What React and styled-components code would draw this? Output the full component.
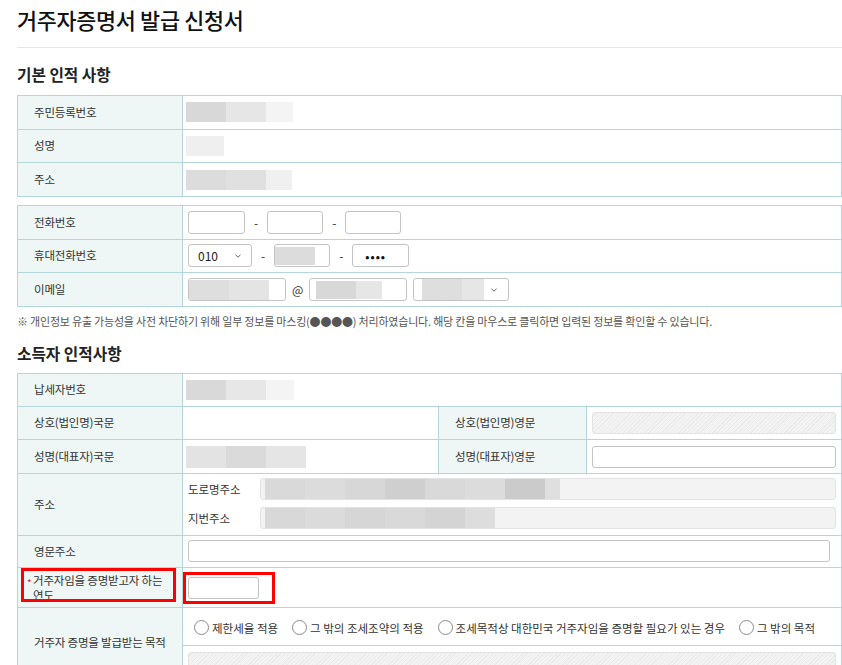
import styled, { createGlobalStyle } from "styled-components";

const GlobalStyle = createGlobalStyle`
  body {
    margin: 0;
    background: #fff;
    font-family: "Noto Sans CJK KR", "Noto Sans", sans-serif;
    color: #333;
  }
`;

const Page = styled.div`
  width: 825px;
  padding: 0 0 40px 17px;
`;

const Title = styled.h1`
  margin: 0;
  padding: 5px 0 12px;
  font-size: 21.8px;
  line-height: 30px;
  font-weight: 500;
  color: #111;
  letter-spacing: -0.3px;
  border-bottom: 1px solid #e5e5e5;
`;

const Heading = styled.h2`
  margin: ${(p) => p.$top}px 0 ${(p) => p.$bottom}px;
  font-size: 15.7px;
  line-height: 20px;
  font-weight: 700;
  color: #222;
`;

const Table = styled.table`
  width: 100%;
  border-collapse: collapse;
  table-layout: fixed;
  border: 1px solid #b2d6da;
  margin-bottom: ${(p) => p.$gap || 0}px;
`;

const Row = styled.tr`
  height: ${(p) => (p.$h || 34) - 0.33}px;
`;

const Th = styled.th`
  position: relative;
  background: #eef7f6;
  border: 1px solid #b2d6da;
  text-align: left;
  font-weight: 400;
  font-size: 11.5px;
  line-height: 15px;
  letter-spacing: -0.2px;
  white-space: nowrap;
  padding: 0 2px 0 ${(p) => (p.$req ? 15 : 16)}px;
  color: #333;
`;

const Td = styled.td`
  position: relative;
  border: 1px solid #b2d6da;
  padding: 0 5px;
  font-size: 11.5px;
  color: #333;
`;

const Line = styled.div`
  display: flex;
  align-items: center;
`;

const Mask = styled.div`
  display: flex;
  height: ${(p) => p.$h || 20}px;
  margin-left: -2px;
`;

const Seg = styled.span`
  display: block;
  width: ${(p) => p.$w}px;
  background: ${(p) => p.$c};
`;

const Field = styled.div`
  box-sizing: border-box;
  display: flex;
  flex: none;
  align-items: center;
  width: ${(p) => p.$w}px;
  height: 23px;
  margin-left: ${(p) => p.$ml || 0}px;
  border: 1px solid #c4c4c4;
  border-radius: 3px;
  background: #fff;
  padding: 0 ${(p) => p.$pad ?? 9}px;
  font-size: 12px;
  color: #222;
  overflow: hidden;
`;

const WideField = styled(Field)`
  width: ${(p) => p.$w || "100%"};
  height: 22px;
`;

const Disabled = styled.div`
  box-sizing: border-box;
  display: flex;
  align-items: center;
  flex: 1;
  height: 22px;
  border: 1px solid #e3e3e3;
  border-radius: 3px;
  padding-left: 6px;
  background: ${(p) =>
    p.$hatch
      ? "repeating-linear-gradient(135deg, #f3f3f3 0 2px, #ebebeb 2px 3px)"
      : "#f3f3f3"};
  overflow: hidden;
`;

const Dash = styled.span`
  margin: 0 9px;
  font-size: 12px;
  color: #333;
`;

const At = styled.span`
  margin: 0 6px;
  font-size: 12px;
  color: #333;
`;

const Chevron = styled.svg`
  margin-left: auto;
  flex: none;
`;

const Dots = styled.span`
  font-size: 11px;
  font-weight: 700;
  letter-spacing: 1px;
  color: #111;
`;

const AddrBlock = styled.div`
  display: flex;
  flex-direction: column;
  gap: 7px;
  padding: 4px 0 5px;
`;

const AddrName = styled.span`
  width: 72px;
  flex: none;
  font-size: 11.5px;
  letter-spacing: -0.1px;
`;

const Note = styled.p`
  margin: 6px 0 0;
  font-size: 11px;
  line-height: 16px;
  color: #555;
  letter-spacing: -0.2px;
`;

const Star = styled.span`
  position: absolute;
  left: 9px;
  top: 7px;
  color: #e02020;
  font-size: 10px;
`;

const Marker = styled.div`
  position: absolute;
  box-sizing: border-box;
  border: 3px solid #f00;
  left: ${(p) => p.$x}px;
  top: ${(p) => p.$y}px;
  width: ${(p) => p.$w}px;
  height: ${(p) => p.$h}px;
  pointer-events: none;
`;

const RadioLine = styled.div`
  display: flex;
  align-items: center;
  gap: 14px;
  height: 34px;
  padding-left: 11px;
  border-bottom: 1px solid #b2d6da;
  margin: 0 -5px;
`;

const Radio = styled.label`
  display: flex;
  align-items: center;
  gap: 3px;
  font-size: 11.5px;
  letter-spacing: 0;
  color: #333;
  white-space: nowrap;
`;

const Circle = styled.span`
  box-sizing: border-box;
  width: 15px;
  height: 15px;
  border-radius: 50%;
  border: 1px solid #8a8a8a;
  background: #fff;
`;

const PurposeBox = styled.div`
  display: flex;
  padding: 6px 0 0;
`;

const down = (
  <Chevron width="8" height="6" viewBox="0 0 8 6">
    <path d="M1.5 1.8 L4 4.2 L6.5 1.8" fill="none" stroke="#666" strokeWidth="1" />
  </Chevron>
);

const masks = {
  rrn: [[40, "#d8d8d8"], [40, "#e6e6e6"], [27, "#f4f4f4"]],
  name: [[38, "#efefef"]],
  addr: [[40, "#dcdcdc"], [40, "#e0e0e0"], [26, "#f0f0f0"]],
  tin: [[40, "#d9d9d9"], [40, "#e7e7e7"], [28, "#f4f4f4"]],
  rep: [[40, "#e3e3e3"], [40, "#dadada"], [40, "#e5e5e5"]],
  road: [
    [40, "#d9d9d9"], [40, "#dcdcdc"], [40, "#d7d7d7"], [40, "#cfcfcf"],
    [40, "#d9d9d9"], [40, "#dcdcdc"], [40, "#cbcbcb"], [15, "#dfdfdf"],
  ],
  lot: [
    [40, "#d8d8d8"], [40, "#dbdbdb"], [40, "#d6d6d6"], [40, "#d9d9d9"],
    [40, "#d4d4d4"], [30, "#dddddd"],
  ],
  mobile: [[40, "#dcdcdc"]],
  mail1: [[40, "#dedede"], [40, "#e4e4e4"]],
  mail2: [[40, "#d8d8d8"], [26, "#e6e6e6"]],
  mail3: [[40, "#dedede"], [22, "#e6e6e6"]],
};

function Masked({ name, h }) {
  return (
    <Mask $h={h}>
      {masks[name].map(([w, c], i) => (
        <Seg key={i} $w={w} $c={c} />
      ))}
    </Mask>
  );
}

const purposes = [
  "제한세율 적용",
  "그 밖의 조세조약의 적용",
  "조세목적상 대한민국 거주자임을 증명할 필요가 있는 경우",
  "그 밖의 목적",
];

export default function App() {
  return (
    <Page>
      <GlobalStyle />
      <Title>거주자증명서 발급 신청서</Title>

      <Heading $top={17} $bottom={10}>기본 인적 사항</Heading>
      <Table $gap={8}>
        <colgroup>
          <col width="165" />
          <col />
        </colgroup>
        <tbody>
          <Row>
            <Th>주민등록번호</Th>
            <Td><Masked name="rrn" /></Td>
          </Row>
          <Row>
            <Th>성명</Th>
            <Td><Masked name="name" /></Td>
          </Row>
          <Row>
            <Th>주소</Th>
            <Td><Masked name="addr" /></Td>
          </Row>
        </tbody>
      </Table>

      <Table>
        <colgroup>
          <col width="165" />
          <col />
        </colgroup>
        <tbody>
          <Row>
            <Th>전화번호</Th>
            <Td>
              <Line>
                <Field $w={57} />
                <Dash>-</Dash>
                <Field $w={56} />
                <Dash>-</Dash>
                <Field $w={56} />
              </Line>
            </Td>
          </Row>
          <Row>
            <Th>휴대전화번호</Th>
            <Td>
              <Line>
                <Field $w={64}>010{down}</Field>
                <Dash>-</Dash>
                <Field $w={56} $pad={2}><Masked name="mobile" h={18} /></Field>
                <Dash>-</Dash>
                <Field $w={57} $pad={12}><Dots>••••</Dots></Field>
              </Line>
            </Td>
          </Row>
          <Row>
            <Th>이메일</Th>
            <Td>
              <Line>
                <Field $w={98} $pad={2}><Masked name="mail1" h={20} /></Field>
                <At>@</At>
                <Field $w={98} $pad={8}><Masked name="mail2" h={18} /></Field>
                <Field $w={96} $pad={10} $ml={6}>
                  <Masked name="mail3" h={22} />
                  {down}
                </Field>
              </Line>
            </Td>
          </Row>
        </tbody>
      </Table>

      <Note>
        ※ 개인정보 유출 가능성을 사전 차단하기 위해 일부 정보를 마스킹(●●●●) 처리하였습니다. 해당 칸을
        마우스로 클릭하면 입력된 정보를 확인할 수 있습니다.
      </Note>

      <Heading $top={15} $bottom={9}>소득자 인적사항</Heading>
      <Table>
        <colgroup>
          <col width="165" />
          <col width="256" />
          <col width="148" />
          <col />
        </colgroup>
        <tbody>
          <Row $h={33}>
            <Th>납세자번호</Th>
            <Td colSpan={3}><Masked name="tin" /></Td>
          </Row>
          <Row>
            <Th>상호(법인명)국문</Th>
            <Td />
            <Th>상호(법인명)영문</Th>
            <Td><Line><Disabled $hatch /></Line></Td>
          </Row>
          <Row>
            <Th>성명(대표자)국문</Th>
            <Td><Masked name="rep" h={22} /></Td>
            <Th>성명(대표자)영문</Th>
            <Td><WideField $w="100%" /></Td>
          </Row>
          <Row $h={62}>
            <Th>주소</Th>
            <Td colSpan={3}>
              <AddrBlock>
                <Line>
                  <AddrName>도로명주소</AddrName>
                  <Disabled><Masked name="road" /></Disabled>
                </Line>
                <Line>
                  <AddrName>지번주소</AddrName>
                  <Disabled><Masked name="lot" /></Disabled>
                </Line>
              </AddrBlock>
            </Td>
          </Row>
          <Row $h={33}>
            <Th>영문주소</Th>
            <Td colSpan={3}>
              <WideField $w="calc(100% - 6px)" />
            </Td>
          </Row>
          <Row $h={40}>
            <Th $req>
              <Star>*</Star>
              거주자임을 증명받고자 하는
              <br />
              연도
              <Marker $x={3} $y={0} $w={155} $h={34} />
            </Th>
            <Td colSpan={3}>
              <WideField $w="71px" />
              <Marker $x={0} $y={4} $w={92} $h={32} />
            </Td>
          </Row>
          <Row $h={70}>
            <Th>거주자 증명을 발급받는 목적</Th>
            <Td colSpan={3}>
              <RadioLine>
                {purposes.map((p) => (
                  <Radio key={p}>
                    <Circle />
                    {p}
                  </Radio>
                ))}
              </RadioLine>
              <PurposeBox>
                <Disabled $hatch />
              </PurposeBox>
            </Td>
          </Row>
        </tbody>
      </Table>
    </Page>
  );
}
